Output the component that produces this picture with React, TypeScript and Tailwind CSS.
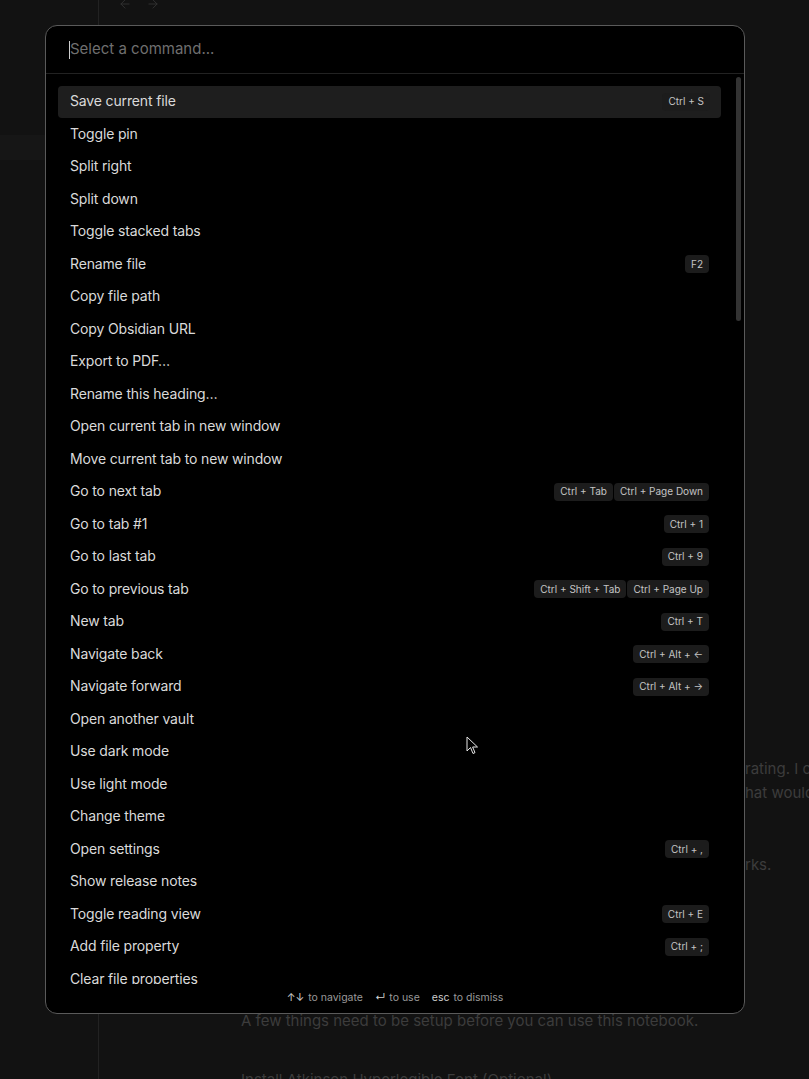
import { ArrowLeft, ArrowRight } from "lucide-react";

type Command = { label: string; keys?: string[] };

const commands: Command[] = [
  { label: "Save current file", keys: ["Ctrl + S"] },
  { label: "Toggle pin" },
  { label: "Split right" },
  { label: "Split down" },
  { label: "Toggle stacked tabs" },
  { label: "Rename file", keys: ["F2"] },
  { label: "Copy file path" },
  { label: "Copy Obsidian URL" },
  { label: "Export to PDF…" },
  { label: "Rename this heading…" },
  { label: "Open current tab in new window" },
  { label: "Move current tab to new window" },
  { label: "Go to next tab", keys: ["Ctrl + Tab", "Ctrl + Page Down"] },
  { label: "Go to tab #1", keys: ["Ctrl + 1"] },
  { label: "Go to last tab", keys: ["Ctrl + 9"] },
  { label: "Go to previous tab", keys: ["Ctrl + Shift + Tab", "Ctrl + Page Up"] },
  { label: "New tab", keys: ["Ctrl + T"] },
  { label: "Navigate back", keys: ["Ctrl + Alt + ←"] },
  { label: "Navigate forward", keys: ["Ctrl + Alt + →"] },
  { label: "Open another vault" },
  { label: "Use dark mode" },
  { label: "Use light mode" },
  { label: "Change theme" },
  { label: "Open settings", keys: ["Ctrl + ,"] },
  { label: "Show release notes" },
  { label: "Toggle reading view", keys: ["Ctrl + E"] },
  { label: "Add file property", keys: ["Ctrl + ;"] },
  { label: "Clear file properties" },
  { label: "Toggle Live Preview/Source mode" },
  { label: "Delete current file" },
];

function Kbd({ text }: { text: string }) {
  return (
    <span className="flex h-[18px] items-center rounded-[4px] bg-[#1c1c1c] px-[6px] text-[10px] text-[#c4c4c4]">
      {text}
    </span>
  );
}

function CommandRow({ cmd, selected }: { cmd: Command; selected: boolean }) {
  return (
    <div
      className={`flex h-[32.5px] shrink-0 items-center justify-between rounded-[4px] px-3 ${
        selected ? "bg-[#1e1e1e]" : ""
      }`}
    >
      <span className="pb-[2px] text-[14px] tracking-[-0.15px] text-[#dadada]">{cmd.label}</span>
      {cmd.keys ? (
        <span className={`flex gap-px ${selected ? "-mr-[1px]" : ""}`}>
          {cmd.keys.map((k) => (
            <Kbd key={k} text={k} />
          ))}
        </span>
      ) : null}
    </div>
  );
}

export default function App() {
  return (
    <div
      className="relative h-[1079px] w-[809px] overflow-hidden bg-[#121212]"
      style={{ fontFamily: "Inter, 'Noto Sans', sans-serif" }}
    >
      {/* workspace behind the palette */}
      <div className="flex h-full">
        <aside className="w-[99px] shrink-0 border-r border-[#222]">
          <div className="mt-[135px] h-[25px] bg-[#161616]" />
        </aside>
        <main className="flex-1">
          <div className="-mt-[3px] flex gap-[14px] pl-[19px] text-[#333]">
            <ArrowLeft size={14} strokeWidth={1.5} />
            <ArrowRight size={14} strokeWidth={1.5} />
          </div>
          <div className="mt-[746px] text-[15px] leading-[24px] whitespace-nowrap text-[#3c3c3c]">
            <div className="pl-[646px]">rating. I could</div>
            <div className="pl-[646px]">hat would</div>
            <div className="mt-[48px] pl-[646px]">rks.</div>
            <div className="mt-[132px] pl-[142px]">
              A few things need to be setup before you can use this notebook.
            </div>
            <div className="mt-[35px] pl-[142px]">Install Atkinson Hyperlegible Font (Optional)</div>
          </div>
        </main>
      </div>

      {/* command palette */}
      <div className="absolute top-[25px] left-[45px] flex h-[989px] w-[700px] flex-col overflow-hidden rounded-[12px] border border-[#5a5a5a] bg-black">
        <div className="flex h-[48px] shrink-0 items-center border-b border-[#222] pl-[23px]">
          <span className="h-[18px] w-px bg-[#cfcfcf]" />
          <span className="text-[15px] text-[#6f6f6f]">Select a command...</span>
        </div>
        <div className="flex min-h-0 flex-1">
          <div className="flex min-h-0 w-[675px] flex-col overflow-hidden pt-[11.5px] pl-3">
            {commands.map((c, i) => (
              <CommandRow key={c.label} cmd={c} selected={i === 0} />
            ))}
          </div>
          <div className="pt-[3px] pl-[15px]">
            <div className="h-[244px] w-[5px] rounded-full bg-[#333]" />
          </div>
        </div>
        <div className="flex h-[29px] shrink-0 items-center justify-center gap-3 pb-[2px] text-[10.5px] text-[#9a9a9a]">
          <span className="flex items-center gap-1">
            <span className="text-[#cfcfcf]">↑↓</span>
            <span>to navigate</span>
          </span>
          <span className="flex items-center gap-1">
            <span className="text-[#cfcfcf]">↵</span>
            <span>to use</span>
          </span>
          <span className="flex items-center gap-1">
            <span className="text-[#cfcfcf]">esc</span>
            <span>to dismiss</span>
          </span>
        </div>
      </div>

      {/* mouse pointer */}
      <svg
        className="absolute top-[736px] left-[466px]"
        width="14"
        height="20"
        viewBox="0 0 14 20"
      >
        <path
          d="M1 1 L1 15 L4.5 11.5 L7 17.5 L9 16.6 L6.6 11 L11.5 11 Z"
          fill="#000"
          stroke="#e6e6e6"
          strokeWidth="1"
          strokeLinejoin="round"
        />
      </svg>
    </div>
  );
}
